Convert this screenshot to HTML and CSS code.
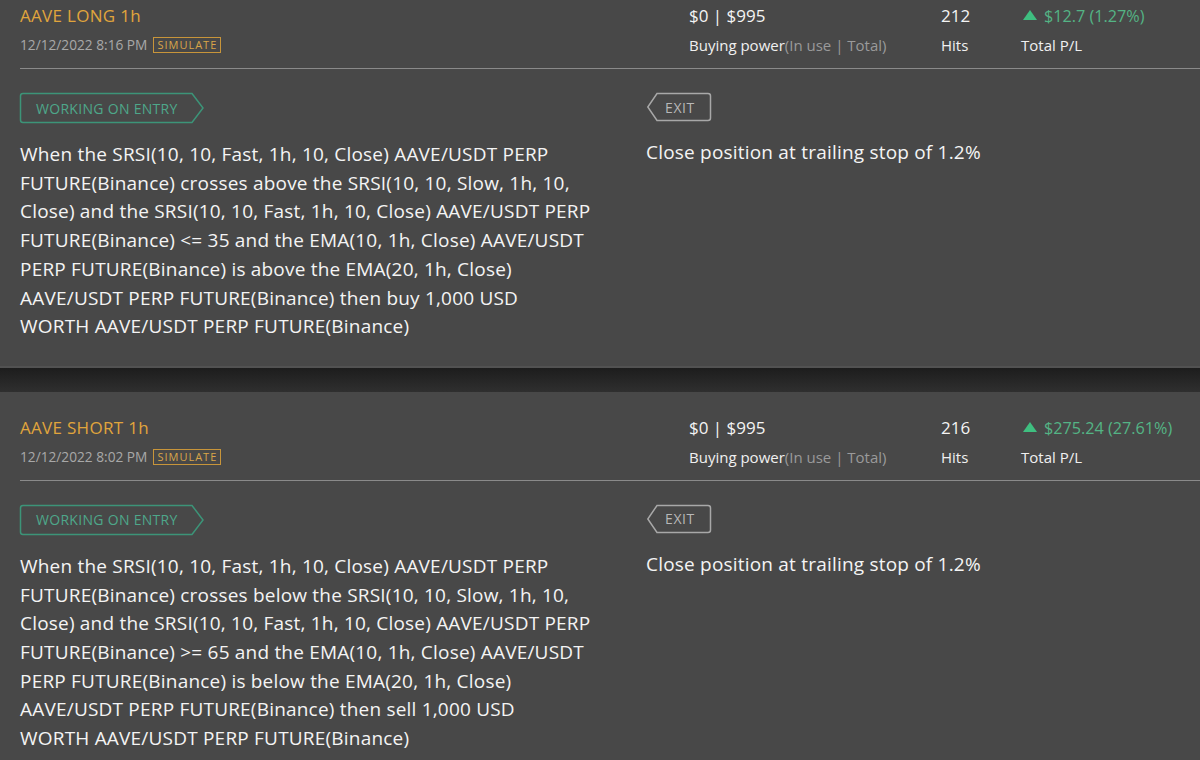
FILE: index.html
```html
<!DOCTYPE html>
<html>
<head>
<meta charset="utf-8">
<link rel="stylesheet" href="styles.css">
</head>
<body>
<div class="list">
  <section class="card">
    <div class="head">
      <div class="hcol">
        <div class="title">AAVE LONG 1h</div>
        <div class="sub">12/12/2022 8:16 PM <span class="sim">SIMULATE</span></div>
      </div>
      <div class="hcol">
        <div class="val">$0 | $995</div>
        <div class="lab">Buying power<span class="muted">(In use | Total)</span></div>
      </div>
      <div class="hcol">
        <div class="val">212</div>
        <div class="lab">Hits</div>
      </div>
      <div class="hcol">
        <div class="val pl"><span class="tri"></span>$12.7 (1.27%)</div>
        <div class="lab">Total P/L</div>
      </div>
    </div>
    <div class="body">
      <div class="col">
        <div class="tag entry">
          <svg class="outline" viewBox="0 0 184 30" preserveAspectRatio="none"><path d="M3 0.5 H172 L183 15 L172 29.5 H3 Q0.5 29.5 0.5 27 V3 Q0.5 0.5 3 0.5 Z" vector-effect="non-scaling-stroke"/></svg>
          <span>WORKING ON ENTRY</span>
        </div>
        <p class="rule">When the SRSI(10, 10, Fast, 1h, 10, Close) AAVE/USDT PERP FUTURE(Binance) crosses above the SRSI(10, 10, Slow, 1h, 10, Close) and the SRSI(10, 10, Fast, 1h, 10, Close) AAVE/USDT PERP FUTURE(Binance) &lt;= 35 and the EMA(10, 1h, Close) AAVE/USDT PERP FUTURE(Binance) is above the EMA(20, 1h, Close) AAVE/USDT PERP FUTURE(Binance) then buy 1,000 USD <span class="nw">WORTH AAVE/USDT</span> PERP FUTURE(Binance)</p>
      </div>
      <div class="col">
        <div class="tag exit">
          <svg class="outline" viewBox="0 0 64 28" preserveAspectRatio="none"><path d="M10 0.5 H61 Q63.5 0.5 63.5 3 V25 Q63.5 27.5 61 27.5 H10 L0.8 14 Z" vector-effect="non-scaling-stroke"/></svg>
          <span>EXIT</span>
        </div>
        <p class="rule">Close position at trailing stop of 1.2%</p>
      </div>
    </div>
  </section>
  <div class="gap"></div>
  <section class="card">
    <div class="head">
      <div class="hcol">
        <div class="title">AAVE SHORT 1h</div>
        <div class="sub">12/12/2022 8:02 PM <span class="sim">SIMULATE</span></div>
      </div>
      <div class="hcol">
        <div class="val">$0 | $995</div>
        <div class="lab">Buying power<span class="muted">(In use | Total)</span></div>
      </div>
      <div class="hcol">
        <div class="val">216</div>
        <div class="lab">Hits</div>
      </div>
      <div class="hcol">
        <div class="val pl"><span class="tri"></span>$275.24 (27.61%)</div>
        <div class="lab">Total P/L</div>
      </div>
    </div>
    <div class="body">
      <div class="col">
        <div class="tag entry">
          <svg class="outline" viewBox="0 0 184 30" preserveAspectRatio="none"><path d="M3 0.5 H172 L183 15 L172 29.5 H3 Q0.5 29.5 0.5 27 V3 Q0.5 0.5 3 0.5 Z" vector-effect="non-scaling-stroke"/></svg>
          <span>WORKING ON ENTRY</span>
        </div>
        <p class="rule">When the SRSI(10, 10, Fast, 1h, 10, Close) AAVE/USDT PERP FUTURE(Binance) crosses below the SRSI(10, 10, Slow, 1h, 10, Close) and the SRSI(10, 10, Fast, 1h, 10, Close) AAVE/USDT PERP FUTURE(Binance) &gt;= 65 and the EMA(10, 1h, Close) AAVE/USDT PERP FUTURE(Binance) is below the EMA(20, 1h, Close) AAVE/USDT PERP FUTURE(Binance) then sell 1,000 USD <span class="nw">WORTH AAVE/USDT</span> PERP FUTURE(Binance)</p>
      </div>
      <div class="col">
        <div class="tag exit">
          <svg class="outline" viewBox="0 0 64 28" preserveAspectRatio="none"><path d="M10 0.5 H61 Q63.5 0.5 63.5 3 V25 Q63.5 27.5 61 27.5 H10 L0.8 14 Z" vector-effect="non-scaling-stroke"/></svg>
          <span>EXIT</span>
        </div>
        <p class="rule">Close position at trailing stop of 1.2%</p>
      </div>
    </div>
  </section>
</div>
</body>
</html>
```

FILE: styles.css
```css
* { box-sizing: border-box; }
html, body {
  margin: 0;
  padding: 0;
  background: #484848;
  overflow: hidden;
  width: 1200px;
  height: 760px;
}
body {
  font-family: "Open Sans", "Liberation Sans", sans-serif;
  color: #f2f2f2;
}
.list {
  margin-top: -20px;
  display: flex;
  flex-direction: column;
}
.card {
  background: #484848;
  padding-bottom: 25px;
}
.gap {
  height: 26px;
  background: linear-gradient(#1d1d1d, #2f2f2f);
  border-top: 2px solid #525252;
}
.head {
  margin-left: 20px;
  padding-top: 24px;
  padding-bottom: 12px;
  border-bottom: 1px solid #8a8a8a;
  display: grid;
  grid-template-columns: 669px 252px 80px 1fr;
}
.hcol {
  display: flex;
  flex-direction: column;
  gap: 6px;
}
.title {
  color: #e0a53c;
  font-size: 17px;
  letter-spacing: 0.3px;
  line-height: 24px;
}
.sub {
  color: #a8a8a8;
  font-size: 13.7px;
  line-height: 22px;
  display: flex;
  align-items: center;
  gap: 6px;
}
.sim {
  border: 1px solid #c8953a;
  color: #d8a548;
  font-size: 11px;
  letter-spacing: 1px;
  line-height: 14px;
  padding: 0 3px;
}
.val {
  font-size: 17px;
  line-height: 24px;
  color: #f4f4f4;
}
.lab {
  font-size: 15px;
  line-height: 22px;
  color: #f0f0f0;
}
.muted { color: #9a9a9a; }
.pl {
  color: #54b485;
  font-size: 16.2px;
  display: flex;
  align-items: center;
}
.tri {
  width: 0;
  height: 0;
  border-left: 7px solid transparent;
  border-right: 7px solid transparent;
  border-bottom: 10px solid #3fbf80;
  margin: 0 7px 2px 2px;
}
.body {
  margin-left: 20px;
  padding-top: 24px;
  display: grid;
  grid-template-columns: 626px 1fr;
}
.tag {
  position: relative;
  display: inline-flex;
  align-items: center;
  height: 30px;
  font-size: 14px;
}
.tag span { position: relative; }
.outline {
  position: absolute;
  inset: 0;
  width: 100%;
  height: 100%;
  overflow: visible;
}
.outline path { fill: none; stroke-width: 1.5px; }
.entry {
  width: 184px;
  color: #4ea78a;
  padding-left: 16px;
  letter-spacing: 0.3px;
}
.entry .outline path { stroke: #3c9478; }
.exit {
  width: 64px;
  height: 28px;
  margin-left: 1px;
  color: #b8b8b8;
  padding-left: 18px;
  letter-spacing: 0.6px;
}
.exit .outline path { stroke: #a8a8a8; }
.rule {
  margin: 17px 0 0;
  font-size: 19px;
  letter-spacing: 0.2px;
  line-height: 28.7px;
  color: #f4f4f4;
  width: 572px;
}
.nw { white-space: nowrap; }
```
